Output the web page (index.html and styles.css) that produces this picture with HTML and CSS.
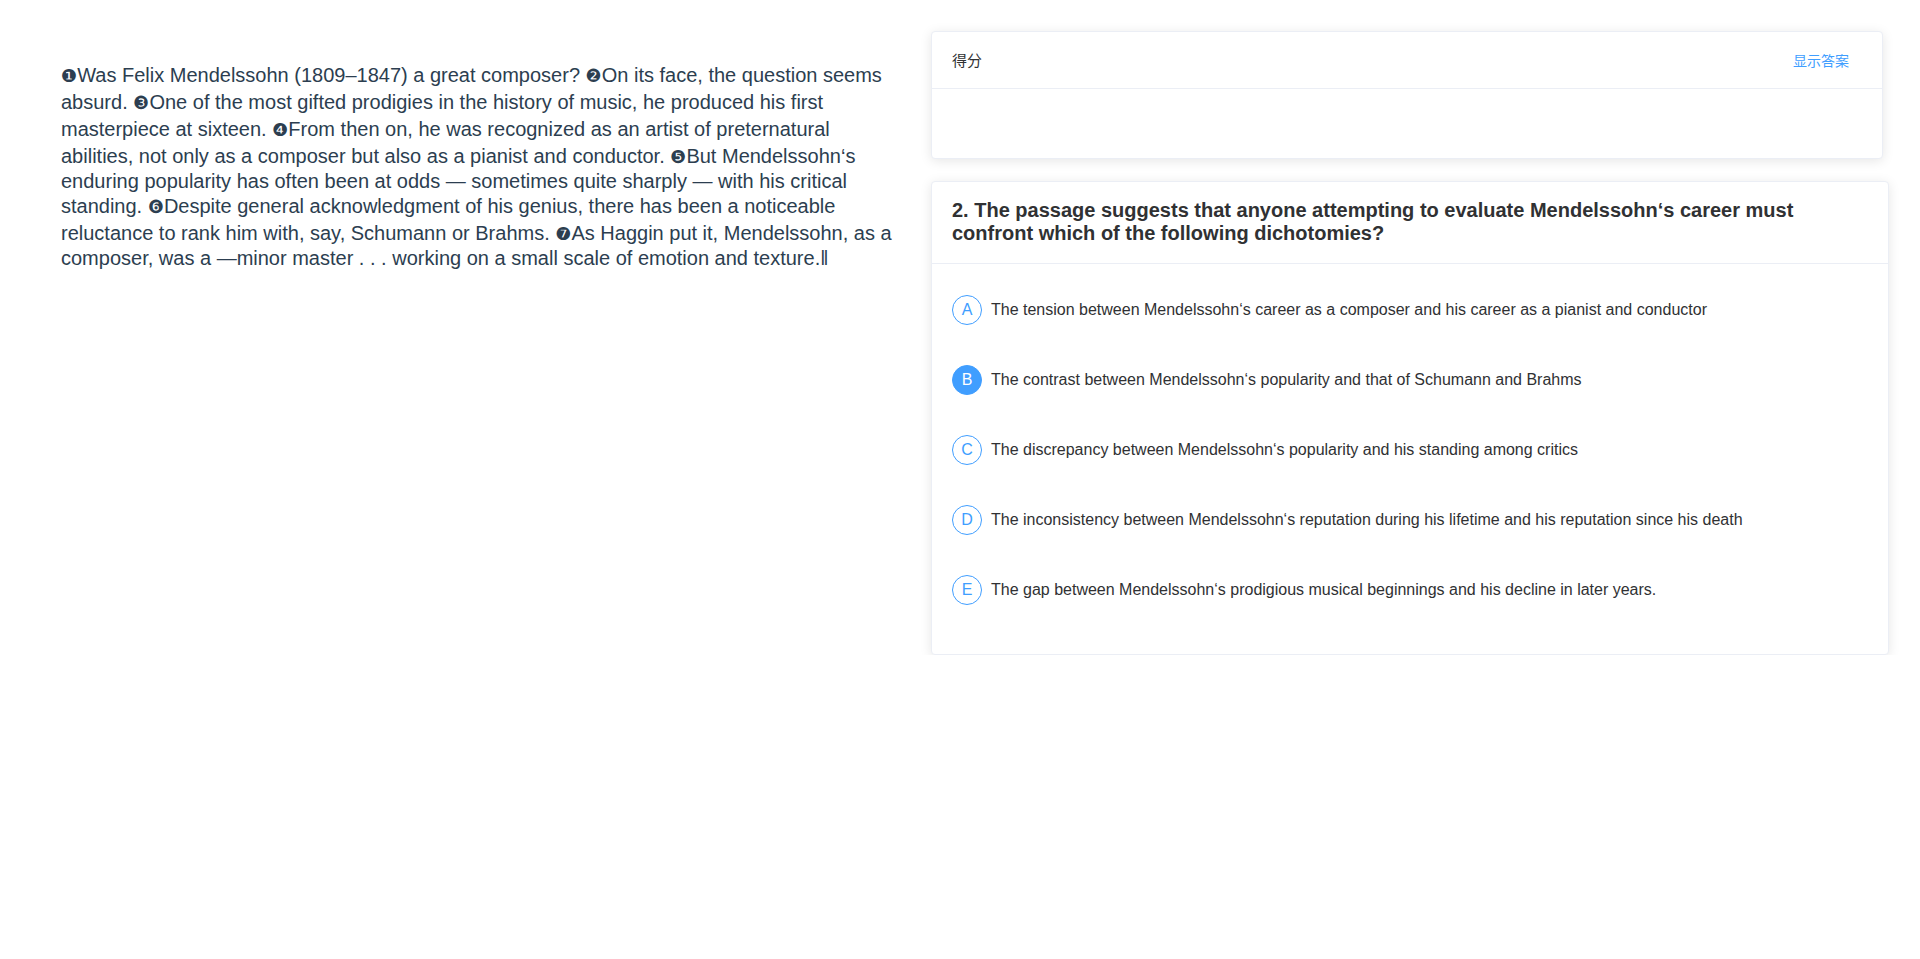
FILE: index.html
```html
<!DOCTYPE html>
<html lang="zh">
<head>
<meta charset="utf-8">
<title>Reading</title>
<link rel="stylesheet" href="styles.css">
</head>
<body>
<div class="page">
  <div class="passage">
    <p class="passage-text"><span class="num">❶</span>Was Felix Mendelssohn (1809–1847) a great composer? <span class="num">❷</span>On its face, the question seems absurd. <span class="num">❸</span>One of the most gifted prodigies in the history of music, he produced his first masterpiece at sixteen. <span class="num">❹</span>From then on, he was recognized as an artist of preternatural abilities, not only as a composer but also as a pianist and conductor. <span class="num">❺</span>But Mendelssohn‘s enduring popularity has often been at odds — sometimes quite sharply — with his critical standing. <span class="num">❻</span>Despite general acknowledgment of his genius, there has been a noticeable reluctance to rank him with, say, Schumann or Brahms. <span class="num">❼</span>As Haggin put it, Mendelssohn, as a composer, was a —minor master . . . working on a small scale of emotion and texture.‖</p>
  </div>
  <div class="side">
    <div class="card score-card">
      <div class="card-header score-header">
        <span class="score-title">得分</span>
        <span class="show-answer">显示答案</span>
      </div>
      <div class="card-body score-body"></div>
    </div>
    <div class="card question-card">
      <div class="card-header question-header">
        <div class="question-title">2. The passage suggests that anyone attempting to evaluate Mendelssohn‘s career must confront which of the following dichotomies?</div>
      </div>
      <div class="card-body question-body">
        <ul class="options">
          <li class="option"><span class="letter">A</span><span class="option-text">The tension between Mendelssohn‘s career as a composer and his career as a pianist and conductor</span></li>
          <li class="option"><span class="letter selected">B</span><span class="option-text">The contrast between Mendelssohn‘s popularity and that of Schumann and Brahms</span></li>
          <li class="option"><span class="letter">C</span><span class="option-text">The discrepancy between Mendelssohn‘s popularity and his standing among critics</span></li>
          <li class="option"><span class="letter">D</span><span class="option-text">The inconsistency between Mendelssohn‘s reputation during his lifetime and his reputation since his death</span></li>
          <li class="option"><span class="letter">E</span><span class="option-text">The gap between Mendelssohn‘s prodigious musical beginnings and his decline in later years.</span></li>
        </ul>
      </div>
    </div>
  </div>
</div>
</body>
</html>
```
FILE: styles.css
```css
* { box-sizing: border-box; }
html, body { margin: 0; padding: 0; background: #fff; }
body {
  font-family: "Liberation Sans", Arial, "Noto Sans CJK SC", sans-serif;
  color: #303133;
}
.page {
  display: flex;
  align-items: flex-start;
  gap: 30px;
  padding: 31px 31px 0 61px;
}
.passage {
  width: 840px;
  flex: none;
  padding-top: 31px;
}
.passage-text {
  margin: 0;
  font-size: 20px;
  line-height: 23px;
  color: #2c3e50;
}
.num {
  font-family: "DejaVu Sans", sans-serif;
  font-size: 18px;
  line-height: 27px;
}
.side {
  width: 958px;
  flex: none;
  display: flex;
  flex-direction: column;
  gap: 22px;
}
.card {
  background: #fff;
  border: 1px solid #ebeef5;
  border-radius: 4px;
  box-shadow: 0 2px 12px 0 rgba(0, 0, 0, 0.1);
  overflow: hidden;
}
.score-card { margin-right: 6px; }
.card-header {
  border-bottom: 1px solid #ebeef5;
}
.score-header {
  display: flex;
  justify-content: space-between;
  align-items: center;
  padding: 18px 20px;
  height: 57px;
}
.score-title {
  font-family: "Noto Sans CJK SC", sans-serif;
  font-size: 15px;
  line-height: 20px;
  color: #303133;
}
.show-answer {
  font-family: "Noto Sans CJK SC", sans-serif;
  font-size: 14px;
  line-height: 20px;
  color: #409eff;
  margin-right: 13px;
}
.score-body { height: 69px; }
.question-header {
  padding: 17px 20px 18px;
}
.question-title {
  font-size: 20px;
  font-weight: bold;
  line-height: 23px;
  color: #303133;
}
.question-body {
  padding: 31px 20px 49px;
}
.options {
  list-style: none;
  margin: 0;
  padding: 0;
  display: flex;
  flex-direction: column;
  gap: 40px;
}
.option {
  display: flex;
  align-items: center;
  height: 30px;
}
.letter {
  width: 30px;
  height: 30px;
  flex: none;
  border: 1px solid #409eff;
  border-radius: 50%;
  color: #409eff;
  font-size: 16px;
  display: flex;
  align-items: center;
  justify-content: center;
  margin-right: 9px;
}
.letter.selected {
  background: #409eff;
  color: #fff;
}
.option-text {
  font-size: 16px;
  color: #303133;
}
```
